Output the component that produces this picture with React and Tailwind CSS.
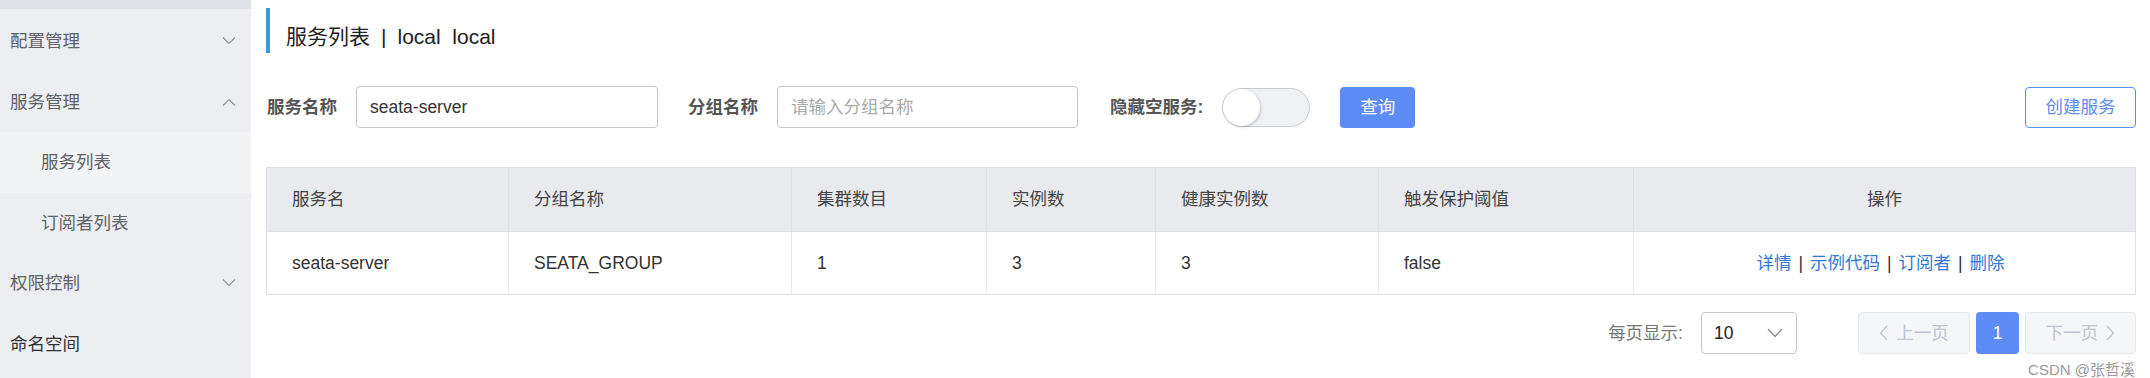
import React from "react";

const font = { fontFamily: '"Liberation Sans", "Noto Sans CJK SC", sans-serif' };

function Chevron({ up = false, className = "" }) {
  return (
    <svg width="14" height="8" viewBox="0 0 14 8" className={className}>
      <path
        d={up ? "M1 7.5 L7 1.5 L13 7.5" : "M1 0.5 L7 6.5 L13 0.5"}
        fill="none"
        stroke="currentColor"
        strokeWidth="1.1"
      />
    </svg>
  );
}

function SideItem({ label, sub = false, active = false, chevron, dark = false }) {
  return (
    <div
      className={`h-[60.5px] flex items-center justify-between pr-[15px] ${sub ? "pl-[41px]" : "pl-[10px]"} ${active ? "bg-[#f3f4f6]" : ""}`}
    >
      <span className={`text-[17.5px] ${dark ? "text-[#303133]" : "text-[#606266]"}`}>{label}</span>
      {chevron && <Chevron up={chevron === "up"} className="text-[#909399]" />}
    </div>
  );
}

function Sidebar() {
  return (
    <aside className="w-[251px] shrink-0 h-[378px] bg-[#eceef1]">
      <div className="h-[9px] bg-[#dfe2e7]" />
      <div className="mt-[2px]">
        <SideItem label="配置管理" chevron="down" />
        <SideItem label="服务管理" chevron="up" />
        <SideItem label="服务列表" sub active />
        <SideItem label="订阅者列表" sub />
        <SideItem label="权限控制" chevron="down" />
        <SideItem label="命名空间" dark />
      </div>
    </aside>
  );
}

function SearchForm() {
  return (
    <div className="mt-[33px] flex items-center justify-between">
      <div className="flex items-center">
        <span className="ml-[1px] text-[17.5px] font-bold text-[#555]">服务名称</span>
        <div className="ml-[19px] w-[302px] h-[42px] border border-[#c4c6cc] rounded-[4px] flex items-center px-[13px] text-[17.5px] text-[#333]">
          seata-server
        </div>
        <span className="ml-[30px] text-[17.5px] font-bold text-[#555]">分组名称</span>
        <div className="ml-[19px] w-[301px] h-[42px] border border-[#c4c6cc] rounded-[4px] flex items-center px-[13px] text-[17.5px] text-[#aaaaaa]">
          请输入分组名称
        </div>
        <span className="ml-[32px] text-[17.5px] font-bold text-[#555]">隐藏空服务:</span>
        <div className="ml-[19px] w-[88px] h-[39px] rounded-full bg-[#f0f1f4] border border-[#c8cad0] relative">
          <div className="absolute left-0 top-0 w-[37px] h-[37px] rounded-full bg-white shadow-[1px_1px_3px_rgba(0,0,0,0.2)]" />
        </div>
        <button className="ml-[30px] w-[75px] h-[41px] rounded-[4px] bg-[#5d8cf6] text-white text-[17.5px]">
          查询
        </button>
      </div>
      <button className="w-[111px] h-[41px] rounded-[4px] border border-[#5d8cf6] bg-white text-[#5d8cf6] text-[17.5px]">
        创建服务
      </button>
    </div>
  );
}

const cols = [
  { title: "服务名", w: "w-[242px]" },
  { title: "分组名称", w: "w-[283px]" },
  { title: "集群数目", w: "w-[195px]" },
  { title: "实例数", w: "w-[169px]" },
  { title: "健康实例数", w: "w-[223px]" },
  { title: "触发保护阈值", w: "w-[255px]" },
  { title: "操作", w: "" },
];

const row = ["seata-server", "SEATA_GROUP", "1", "3", "3", "false"];

function ServiceTable() {
  return (
    <table className="mt-[39px] w-full table-fixed border-collapse border border-[#dfe1e6] text-[17.5px] text-[#333]">
      <colgroup>
        {cols.map((c, i) => (
          <col key={i} className={c.w} />
        ))}
      </colgroup>
      <thead>
        <tr className="h-[64px] bg-[#e9eaee]">
          {cols.map((c, i) => (
            <th
              key={i}
              className={`font-normal border-r border-[#dfe1e6] px-[25px] ${i === 6 ? "text-center" : "text-left"} text-[#444]`}
            >
              {c.title}
            </th>
          ))}
        </tr>
      </thead>
      <tbody>
        <tr className="h-[63px] border-t border-[#dfe1e6]">
          {row.map((v, i) => (
            <td key={i} className="border-r border-[#e6e8ec] px-[25px]">
              {v}
            </td>
          ))}
          <td className="text-center pr-[8px]">
            <span className="text-[#2f7bd6]">详情</span>
            <span className="mx-[7px]">|</span>
            <span className="text-[#2f7bd6]">示例代码</span>
            <span className="mx-[7px]">|</span>
            <span className="text-[#2f7bd6]">订阅者</span>
            <span className="mx-[7px]">|</span>
            <span className="text-[#2f7bd6]">删除</span>
          </td>
        </tr>
      </tbody>
    </table>
  );
}

function Pagination() {
  return (
    <div className="mt-[17px] flex items-center justify-end">
      <span className="text-[17.5px] text-[#777]">每页显示:</span>
      <div className="ml-[18px] w-[96px] h-[42px] border border-[#c4c6cc] rounded-[4px] flex items-center justify-between pl-[12px] pr-[13px]">
        <span className="text-[17.5px] text-[#222]">10</span>
        <svg width="16" height="10" viewBox="0 0 16 10" className="text-[#888]">
          <path d="M1 1 L8 8.5 L15 1" fill="none" stroke="currentColor" strokeWidth="1.2" />
        </svg>
      </div>
      <div className="ml-[61px] w-[112px] h-[42px] rounded-[4px] border border-[#e6e8eb] bg-[#f5f6f8] flex items-center justify-center gap-[8px] text-[17.5px] text-[#c0c4cc]">
        <svg width="9" height="16" viewBox="0 0 9 16">
          <path d="M8 1 L1.5 8 L8 15" fill="none" stroke="currentColor" strokeWidth="1.3" />
        </svg>
        上一页
      </div>
      <div className="ml-[6px] w-[43px] h-[42px] rounded-[4px] bg-[#5d8cf6] text-white flex items-center justify-center text-[17.5px]">
        1
      </div>
      <div className="ml-[6px] w-[111px] h-[42px] rounded-[4px] border border-[#e6e8eb] bg-[#f5f6f8] flex items-center justify-center gap-[8px] text-[17.5px] text-[#c0c4cc]">
        下一页
        <svg width="9" height="16" viewBox="0 0 9 16">
          <path d="M1 1 L7.5 8 L1 15" fill="none" stroke="currentColor" strokeWidth="1.3" />
        </svg>
      </div>
    </div>
  );
}

export default function App() {
  return (
    <div className="w-[2150px] h-[378px] overflow-hidden bg-white flex" style={font}>
      <Sidebar />
      <main className="flex-1 pl-[15px] pr-[14px] pt-[8px] relative">
        <div className="flex h-[45px]">
          <div className="w-[4px] h-[45px] bg-[#3d9bd3]" />
          <h1 className="ml-[16px] mt-[13px] text-[21px] leading-[32px] text-[#222]">
            服务列表<span className="mx-[11px]">|</span>local&nbsp;&nbsp;local
          </h1>
        </div>
        <SearchForm />
        <ServiceTable />
        <Pagination />
        <div className="absolute right-[15px] bottom-[1px] text-[15px] text-[#999] leading-none">
          CSDN @张哲溪
        </div>
      </main>
    </div>
  );
}
